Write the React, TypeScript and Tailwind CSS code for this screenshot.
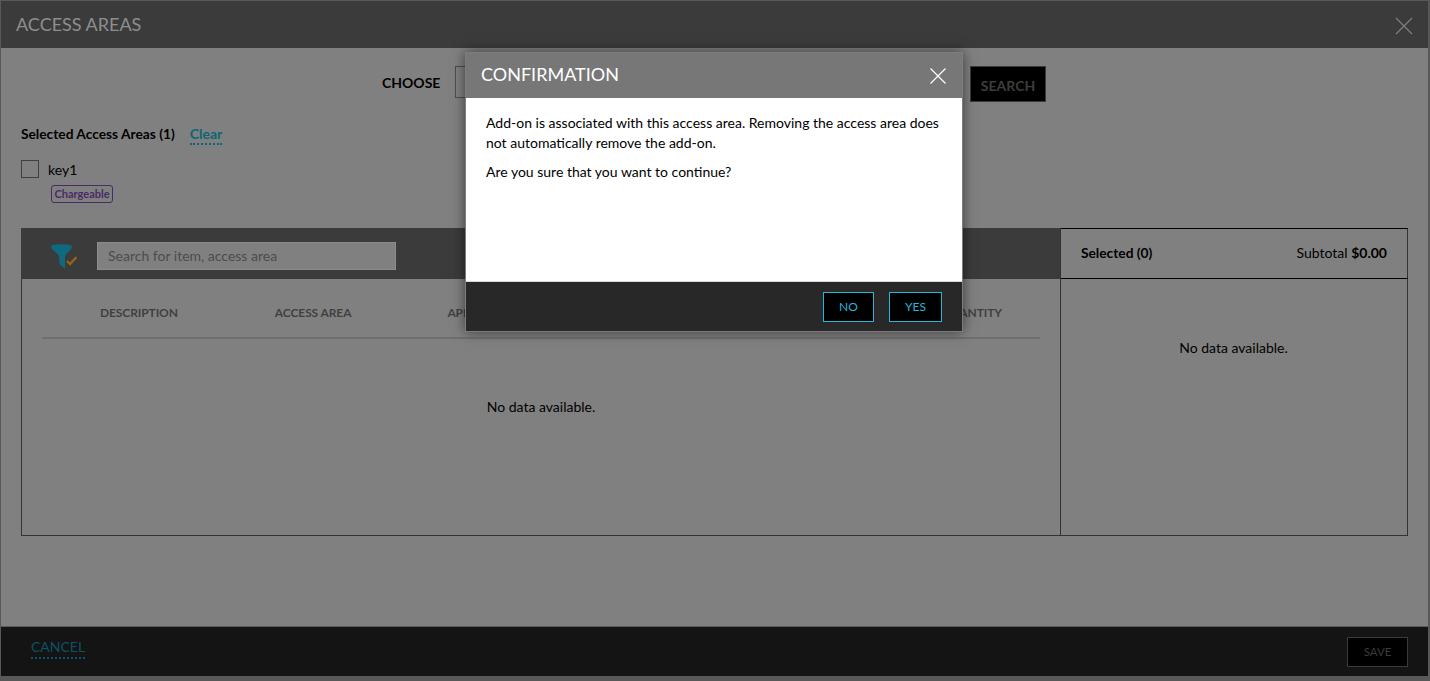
export default function App() {
  return (
    <div className="relative h-[681px] w-[1430px] overflow-hidden bg-[#585858] font-['Lato','Noto_Sans',sans-serif] text-black">
      {/* Access areas dialog */}
      <div className="ml-px mt-px flex h-[675px] w-[1427px] flex-col bg-[#808080]">
        <header className="flex h-[47px] shrink-0 items-center justify-between bg-[#3b3b3b] pl-[15px] pr-[15px]">
          <h1 className="text-[18px] font-normal leading-[47px] text-[#8e8e8e]">ACCESS AREAS</h1>
          <svg width="18" height="18" viewBox="0 0 18 18" className="mt-[2px] text-[#808080]">
            <path d="M1 1 L17 17 M17 1 L1 17" stroke="currentColor" strokeWidth="1.1" fill="none" />
          </svg>
        </header>

        <main className="flex min-h-0 flex-1 flex-col px-[20px]">
          <div className="mt-[18px] flex h-[36px] items-center pl-[361px]">
            <span className="-mt-[2px] w-[58px] shrink-0 whitespace-nowrap text-[14px] font-bold leading-none">CHOOSE</span>
            <div className="ml-[15px] h-[32px] w-[500px] self-start border border-[#4d4d4d]" />
            <button className="ml-[15px] h-[36px] w-[76px] border border-[#3b3b3b] bg-black pt-[2px] text-[14px] font-bold text-[#3d3d3d]">
              SEARCH
            </button>
          </div>

          <div className="mt-[22px] flex h-[20px] items-center">
            <span className="text-[13.75px] font-bold leading-none">Selected Access Areas (1)</span>
            <span className="ml-[15px] mt-[2px] border-b-2 border-dotted border-[#0b6677] pb-px text-[14px] font-bold leading-[17px] text-[#0b6677]">
              Clear
            </span>
          </div>

          <div className="mt-[16px] flex h-[18px] items-center">
            <span className="h-[18px] w-[18px] border border-[#3f3f3f]" />
            <span className="ml-[9px] mt-[2px] text-[14px] leading-none">key1</span>
          </div>
          <div className="ml-[30px] mt-[7px] flex h-[18px] w-[62px] items-center justify-center rounded-[3px] border border-[#4b2a68] text-[11px] font-bold text-[#4b2a68]">
            Chargeable
          </div>

          <section className="mt-[25px] flex h-[308px] w-[1387px] border border-t-0 border-[#333]">
            <div className="flex w-[1038px] flex-col">
              <div className="-ml-px flex h-[51px] items-center bg-[#3b3b3b] pl-[30px]">
                <svg width="26" height="25" viewBox="0 0 26 25" className="mt-[5px]">
                  <path d="M0 2.5 C0 -0.5 21 -0.5 21 2.5 C21 5.5 16 8.5 14 12 L14 25 L8.5 20 L8 12 C6 8.5 0 5.5 0 2.5 Z" fill="#0f6a80" />
                  <path d="M16 17 L19 20 L25.5 13" stroke="#94660f" strokeWidth="2.4" fill="none" />
                </svg>
                <div className="ml-[20px] mt-[4px] flex h-[28px] w-[299px] items-center border border-[#8c8c8c] bg-[#808080] pl-[10px] text-[14px] text-[#4c4c4c]">
                  Search for item, access area
                </div>
              </div>
              <div className="mx-[20px] flex h-[60px] items-center border-b-2 border-[#6f6f6f] pt-[10px] text-[12px] font-bold tracking-[-0.1px] text-[#404040]">
                <span className="ml-[58px]">DESCRIPTION</span>
                <span className="ml-[97px]">ACCESS AREA</span>
                <span className="ml-[96px]">APPLIES TO</span>
                <span className="ml-auto mr-[38px]">QUANTITY</span>
              </div>
              <div className="flex flex-1 items-start justify-center pt-[57px] text-[14px]">No data available.</div>
            </div>
            <div className="-mr-px flex flex-1 flex-col border-l border-[#333]">
              <div className="flex h-[51px] items-center justify-between border-y border-black pb-[2px] pl-[20px] pr-[21px] text-[14px]">
                <span className="mt-px text-[13.75px] font-bold">Selected (0)</span>
                <span>
                  Subtotal <b className="font-bold">$0.00</b>
                </span>
              </div>
              <div className="flex flex-1 items-start justify-center pr-[2px] pt-[58px] text-[14px]">No data available.</div>
            </div>
          </section>
        </main>

        <footer className="flex h-[50px] shrink-0 items-center justify-between border-t border-[#5a5a5a] bg-[#141414] pl-[30px] pr-[20px]">
          <span className="mt-[-8px] border-b-2 border-dotted border-[#0b5366] text-[14px] leading-[20px] text-[#0b5366]">CANCEL</span>
          <button className="mt-px h-[30px] w-[61px] border border-[#3b3b3b] bg-black text-[11.5px] text-[#3b3b3b]">SAVE</button>
        </footer>
      </div>

      {/* Confirmation dialog */}
      <div className="absolute left-[465px] top-[52px] flex h-[280px] w-[498px] flex-col border border-[#7d7d7d] shadow-[0_0_12px_rgba(0,0,0,0.55)]">
        <div className="flex h-[45px] shrink-0 items-center justify-between bg-[#777777] pl-[15px] pr-[16px]">
          <h2 className="-mt-[2px] text-[18px] font-normal text-white">CONFIRMATION</h2>
          <svg width="16" height="16" viewBox="0 0 16 16" className="mt-px">
            <path d="M0.5 0.5 L15.5 15.5 M15.5 0.5 L0.5 15.5" stroke="#fff" strokeWidth="1.2" fill="none" />
          </svg>
        </div>
        <div className="flex-1 bg-white px-[20px] pt-[15px] text-[14px] leading-[20px]">
          <p>
            Add-on is associated with this access area. Removing the access area does not automatically remove the add-on.
          </p>
          <p className="mt-[9px]">Are you sure that you want to continue?</p>
        </div>
        <div className="flex h-[50px] shrink-0 items-center justify-end gap-[15px] border-t border-[#d8d8d8] bg-[#282828] pr-[20px]">
          <button className="h-[30px] w-[51px] border border-[#22b8dc] bg-black text-[12px] text-[#22b8dc]">NO</button>
          <button className="h-[30px] w-[53px] border border-[#22b8dc] bg-black text-[12px] text-[#22b8dc]">YES</button>
        </div>
      </div>
    </div>
  );
}
